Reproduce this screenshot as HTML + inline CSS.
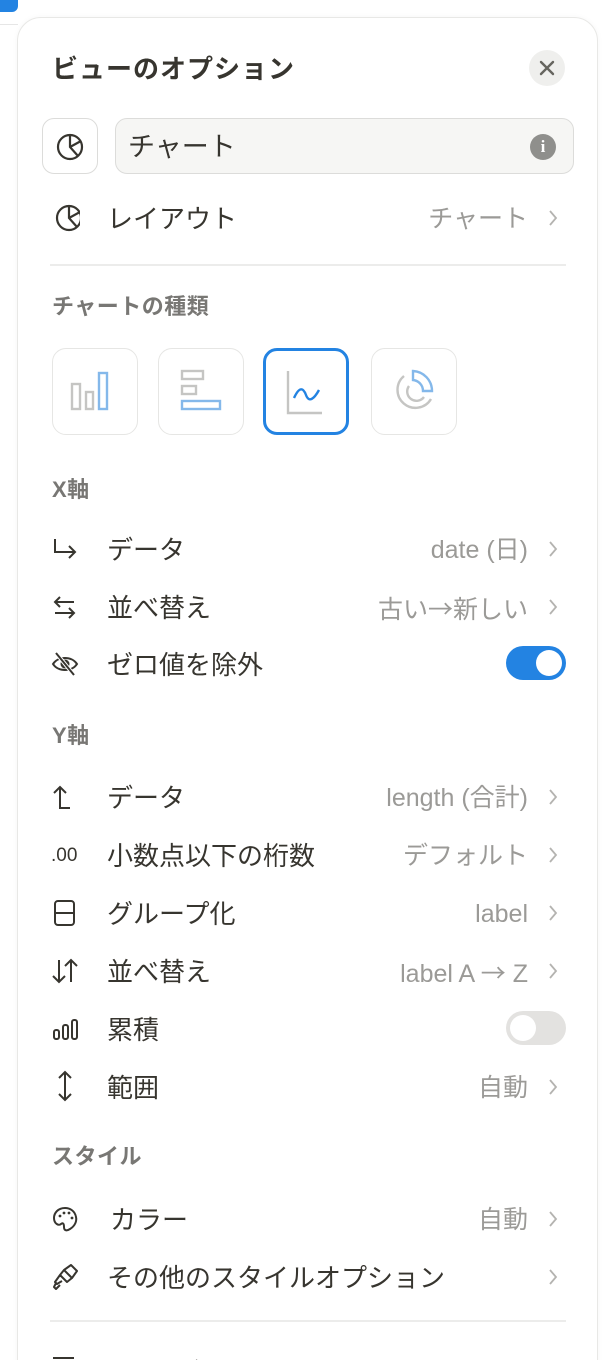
<!DOCTYPE html>
<html><head><meta charset="utf-8">
<style>
*{margin:0;padding:0;box-sizing:border-box}
html,body{width:614px;height:1360px;overflow:hidden;background:#fff;font-family:"Liberation Sans","Noto Sans CJK JP",sans-serif}
#wrap{position:relative;width:614px;height:1360px;overflow:hidden}
.bluetop{position:absolute;left:-10px;top:-10px;width:28px;height:22px;background:#2383e2;border-radius:6px}
.line0{position:absolute;left:0;top:24px;width:18px;height:1px;background:#e6e6e6}
.panel{position:absolute;left:17px;top:17px;width:581px;height:1400px;border:1px solid #e8e8e6;border-radius:24px;background:#fff;box-shadow:0 0 6px rgba(0,0,0,0.04)}
.abs{position:absolute}
.title{left:52px;top:51px;font-size:26px;font-weight:bold;color:#37352f;letter-spacing:1px;line-height:36px}
.close{left:529px;top:50px;width:36px;height:36px;border-radius:50%;background:#efefed}
.iconbox{left:42px;top:118px;width:56px;height:56px;border:1px solid #dcdcda;border-radius:12px}
.input{left:115px;top:118px;width:459px;height:56px;border:1px solid #dcdcda;border-radius:12px;background:#f6f6f4;font-size:27px;color:#37352f;padding-left:12px;line-height:56px}
.info{left:530px;top:134px;width:26px;height:26px;border-radius:50%;background:#8f8f8c;color:#fff;font-size:17px;font-weight:bold;text-align:center;line-height:26px;font-family:"Liberation Serif",serif}
.row{position:absolute;left:0;width:614px;height:40px}
.row .lbl{position:absolute;left:107px;top:2px;line-height:40px;font-size:26px;color:#37352f;white-space:nowrap}
.row .val{position:absolute;right:86px;top:2px;line-height:40px;font-size:25px;color:#9b9a97;white-space:nowrap}
.ar{font-family:"Noto Sans CJK JP",sans-serif}
.row svg.ic{position:absolute;left:50px;top:6px}
.row .chev{position:absolute;left:546px;top:12px}
.hdr{position:absolute;left:52px;font-size:22px;color:#787774;font-weight:bold;line-height:28px;letter-spacing:0.5px}
.div{position:absolute;left:50px;width:516px;height:2px;background:#ececeb}
.ct{position:absolute;top:348px;width:86px;height:87px;border:1px solid #e6e6e4;border-radius:14px}
.toggle{position:absolute;left:506px;width:60px;height:34px;border-radius:17px}
.knob{position:absolute;top:4px;width:26px;height:26px;border-radius:50%;background:#fff}
</style></head><body><div id="wrap">
<div class="bluetop"></div><div class="line0"></div>
<div class="panel"></div>
<div class="abs title">ビューのオプション</div>
<div class="abs close"><svg width="36" height="36"><path d="M12 12L24 24M24 12L12 24" stroke="#66655f" stroke-width="2.4" stroke-linecap="round"/></svg></div>
<div class="abs iconbox"><svg width="56" height="56"><circle cx="27" cy="28" r="12" fill="none" stroke="#37352f" stroke-width="2.2"/><path d="M27 16V28L35 37M27 28L38 22" fill="none" stroke="#37352f" stroke-width="2.2"/></svg></div>
<div class="abs input">チャート</div>
<div class="abs info">i</div>

<div class="row" style="top:197px"><svg class="ic" width="30" height="30"><circle cx="19" cy="15" r="12" fill="none" stroke="#37352f" stroke-width="2.2"/><path d="M19 3V15L27 24M19 15L30 9" fill="none" stroke="#37352f" stroke-width="2.2"/></svg><div class="lbl">レイアウト</div><div class="val">チャート</div><svg class="chev" width="14" height="18"><path d="M4 2L10 9L4 16" fill="none" stroke="#b4b3b0" stroke-width="1.8"/></svg></div>
<div class="div" style="top:264px"></div>
<div class="hdr" style="top:293px">チャートの種類</div>

<div class="ct" style="left:52px"><svg width="86" height="87"><rect x="19" y="35" width="8" height="25" fill="none" stroke="#c5c5c3" stroke-width="2.4"/><rect x="33" y="43" width="7" height="17" fill="none" stroke="#c5c5c3" stroke-width="2.4"/><rect x="46" y="24" width="8" height="36" fill="none" stroke="#84b8ea" stroke-width="2.4"/></svg></div>
<div class="ct" style="left:158px"><svg width="86" height="87"><rect x="23" y="22" width="21" height="8" fill="none" stroke="#c5c5c3" stroke-width="2.4"/><rect x="23" y="37" width="14" height="8" fill="none" stroke="#c5c5c3" stroke-width="2.4"/><rect x="23" y="52" width="38" height="8" fill="none" stroke="#84b8ea" stroke-width="2.4"/></svg></div>
<div class="ct" style="left:263px;border:3px solid #2383e2"><svg width="86" height="87"><path d="M22 20V62H56" fill="none" stroke="#c5c5c3" stroke-width="2.4"/><path d="M28 47C33 36 37 36 40 44C43 52 48 48 53 39" fill="none" stroke="#2383e2" stroke-width="2.4"/></svg></div>
<div class="ct" style="left:371px"><svg width="86" height="87"><path d="M32 27A18 18 0 1 0 59 50" fill="none" stroke="#c5c5c3" stroke-width="2.4"/><path d="M37 37A9 9 0 1 0 52 48" fill="none" stroke="#c5c5c3" stroke-width="2.4"/><path d="M41 22A20 20 0 0 1 60 42H51A11 11 0 0 0 41 31Z" fill="none" stroke="#84b8ea" stroke-width="2.4"/></svg></div>

<div class="hdr" style="top:476px">X軸</div>
<div class="row" style="top:528px"><svg class="ic" width="30" height="30"><path d="M5 5V18H25M19 12L25 18L19 24" fill="none" stroke="#37352f" stroke-width="2"/></svg><div class="lbl">データ</div><div class="val">date (日)</div><svg class="chev" width="14" height="18"><path d="M4 2L10 9L4 16" fill="none" stroke="#b4b3b0" stroke-width="1.8"/></svg></div>
<div class="row" style="top:586px"><svg class="ic" width="30" height="30"><path d="M24 10H5M10 5L5 10L10 15M5 21H24M19 16L24 21L19 26" fill="none" stroke="#37352f" stroke-width="2"/></svg><div class="lbl">並べ替え</div><div class="val">古い<span class="ar">→</span>新しい</div><svg class="chev" width="14" height="18"><path d="M4 2L10 9L4 16" fill="none" stroke="#b4b3b0" stroke-width="1.8"/></svg></div>
<div class="row" style="top:643px"><svg class="ic" width="30" height="30"><path d="M3 15C8 7 22 7 27 15C22 23 8 23 3 15Z" fill="none" stroke="#37352f" stroke-width="2"/><circle cx="15" cy="15" r="4.5" fill="#37352f"/><path d="M6 4L24 26" stroke="#fff" stroke-width="4"/><path d="M6 4L24 26" stroke="#37352f" stroke-width="2"/></svg><div class="lbl">ゼロ値を除外</div><div class="toggle" style="top:3px;background:#2383e2"><div class="knob" style="left:30px"></div></div></div>

<div class="hdr" style="top:722px">Y軸</div>
<div class="row" style="top:776px"><svg class="ic" width="30" height="30"><path d="M10 5V26H20M4 11L10 5L16 11" fill="none" stroke="#37352f" stroke-width="2"/></svg><div class="lbl">データ</div><div class="val">length (合計)</div><svg class="chev" width="14" height="18"><path d="M4 2L10 9L4 16" fill="none" stroke="#b4b3b0" stroke-width="1.8"/></svg></div>
<div class="row" style="top:834px"><span style="position:absolute;left:51px;top:2px;line-height:40px;font-size:19px;color:#37352f">.00</span><div class="lbl">小数点以下の桁数</div><div class="val">デフォルト</div><svg class="chev" width="14" height="18"><path d="M4 2L10 9L4 16" fill="none" stroke="#b4b3b0" stroke-width="1.8"/></svg></div>
<div class="row" style="top:892px"><svg class="ic" width="30" height="30"><rect x="5" y="3" width="19" height="24" rx="3" fill="none" stroke="#37352f" stroke-width="2"/><path d="M5 15H24" stroke="#37352f" stroke-width="2"/></svg><div class="lbl">グループ化</div><div class="val">label</div><svg class="chev" width="14" height="18"><path d="M4 2L10 9L4 16" fill="none" stroke="#b4b3b0" stroke-width="1.8"/></svg></div>
<div class="row" style="top:950px"><svg class="ic" width="30" height="30"><path d="M9 4V26M3 20L9 26L15 20M21 26V4M15 10L21 4L27 10" fill="none" stroke="#37352f" stroke-width="2"/></svg><div class="lbl">並べ替え</div><div class="val">label A <span class="ar">→</span> Z</div><svg class="chev" width="14" height="18"><path d="M4 2L10 9L4 16" fill="none" stroke="#b4b3b0" stroke-width="1.8"/></svg></div>
<div class="row" style="top:1008px"><svg class="ic" width="30" height="30"><rect x="4" y="16" width="5" height="9" rx="2" fill="none" stroke="#37352f" stroke-width="2"/><rect x="13" y="11" width="5" height="14" rx="2" fill="none" stroke="#37352f" stroke-width="2"/><rect x="22" y="6" width="5" height="19" rx="2" fill="none" stroke="#37352f" stroke-width="2"/></svg><div class="lbl">累積</div><div class="toggle" style="top:3px;background:#e3e2e0"><div class="knob" style="left:4px"></div></div></div>
<div class="row" style="top:1066px"><svg class="ic" width="30" height="34" style="top:3px"><path d="M15 3V31M9 9L15 3L21 9M9 25L15 31L21 25" fill="none" stroke="#37352f" stroke-width="2"/></svg><div class="lbl">範囲</div><div class="val">自動</div><svg class="chev" width="14" height="18"><path d="M4 2L10 9L4 16" fill="none" stroke="#b4b3b0" stroke-width="1.8"/></svg></div>

<div class="hdr" style="top:1143px">スタイル</div>
<div class="row" style="top:1198px"><svg class="ic" width="30" height="30"><path d="M15 4C8 4 4 9 4 14C4 20 9 22 11 20C13 18 14 20 14 23C14 27 17 27 20 25C25 22 27 17 26 13C25 7 20 4 15 4Z" fill="none" stroke="#37352f" stroke-width="2"/><circle cx="10" cy="12" r="1.4" fill="#37352f"/><circle cx="14" cy="9" r="1.4" fill="#37352f"/><circle cx="19" cy="9" r="1.4" fill="#37352f"/><circle cx="22" cy="14" r="1.4" fill="#37352f"/></svg><div class="lbl" style="left:110px">カラー</div><div class="val">自動</div><svg class="chev" width="14" height="18"><path d="M4 2L10 9L4 16" fill="none" stroke="#b4b3b0" stroke-width="1.8"/></svg></div>
<div class="row" style="top:1256px"><svg class="ic" width="30" height="30"><path d="M14 8L21 3L27 9L22 16ZM14 8L22 16L17 20L10 13Z M10 13L5 20L7 22L12 19 M6 21L4 25L6 27L10 23" fill="none" stroke="#37352f" stroke-width="2" stroke-linejoin="round"/></svg><div class="lbl">その他のスタイルオプション</div><svg class="chev" width="14" height="18"><path d="M4 2L10 9L4 16" fill="none" stroke="#b4b3b0" stroke-width="1.8"/></svg></div>
<div class="div" style="top:1320px"></div>
<div class="row" style="top:1350px"><svg class="ic" width="30" height="30" style="top:4px"><path d="M3 4H24" stroke="#37352f" stroke-width="2"/></svg><div class="lbl">フィルター</div><svg class="chev" width="14" height="18"><path d="M4 2L10 9L4 16" fill="none" stroke="#b4b3b0" stroke-width="1.8"/></svg></div>
</div></body></html>
